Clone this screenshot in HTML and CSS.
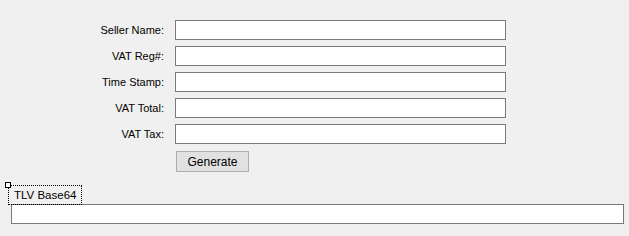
FILE: index.html
```html
<!DOCTYPE html>
<html lang="en">
<head>
    <meta charset="UTF-8">
    <title>ZATCA QR</title>
    <link rel="stylesheet" href="styles.css">
</head>
<body>
    <div class="form">
        <label class="label" for="seller">Seller Name:</label>
        <input class="field" type="text" id="seller">
        <label class="label" for="vatreg">VAT Reg#:</label>
        <input class="field" type="text" id="vatreg">
        <label class="label" for="stamp">Time Stamp:</label>
        <input class="field" type="text" id="stamp">
        <label class="label" for="total">VAT Total:</label>
        <input class="field" type="text" id="total">
        <label class="label" for="tax">VAT Tax:</label>
        <input class="field" type="text" id="tax">
        <span></span>
        <div class="actions">
            <button type="button" class="button">Generate</button>
        </div>
    </div>

    <div class="group">
        <div class="group-head">
            <span class="handle"></span>
            <span class="caption">TLV Base64</span>
        </div>
        <input class="field wide" type="text" id="tlv">
    </div>
</body>
</html>
```
FILE: styles.css
```css
body {
    margin: 0;
    background: #f0f0f0;
    font-family: "Liberation Sans", Arial, sans-serif;
    font-size: 11px;
    color: #000;
    width: 629px;
    height: 236px;
    overflow: hidden;
}
.form {
    display: grid;
    grid-template-columns: 175px 331px;
    grid-auto-rows: 20px;
    row-gap: 6px;
    padding-top: 20px;
}
.label {
    text-align: right;
    padding-right: 11px;
    line-height: 20px;
}
.field {
    box-sizing: border-box;
    width: 100%;
    height: 20px;
    margin: 0;
    padding: 0 3px;
    border: 1px solid #7a7a7a;
    background: #ffffff;
    font: inherit;
}
.actions {
    display: flex;
    padding-top: 1px;
    padding-left: 1px;
}
.button {
    box-sizing: border-box;
    width: 73px;
    height: 21px;
    margin: 0;
    background: #e1e1e1;
    border: 1px solid #adadad;
    font: inherit;
    font-size: 12px;
    color: #000;
    padding: 0;
}
.group {
    padding-top: 15px;
}
.group-head {
    position: relative;
    height: 19px;
    margin-left: 8px;
}
.handle {
    position: absolute;
    left: -3px;
    top: -3px;
    width: 4px;
    height: 4px;
    border: 1px solid #000;
    background: #fff;
}
.caption {
    display: inline-block;
    box-sizing: border-box;
    height: 20px;
    line-height: 18px;
    padding: 0 5px;
    border: 1px dotted #000;
    font-size: 11.5px;
    white-space: nowrap;
}
.wide {
    display: block;
    width: 613px;
    margin-left: 11px;
}
```
